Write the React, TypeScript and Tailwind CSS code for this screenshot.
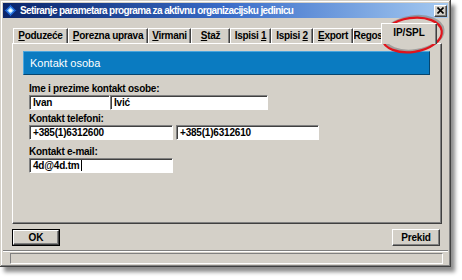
const tabs = [
  { label: "Poduzeće", pre: "", key: "P", rest: "oduzeće", w: "w-[55px]" },
  { label: "Porezna uprava", pre: "", key: "P", rest: "orezna uprava", w: "w-[80px]" },
  { label: "Virmani", pre: "", key: "V", rest: "irmani", w: "w-[43px]" },
  { label: "Staž", pre: "", key: "S", rest: "taž", w: "w-[39px]" },
  { label: "Ispisi 1", pre: "Ispisi\u00a0", key: "1", rest: "", w: "w-[41px]" },
  { label: "Ispisi 2", pre: "Ispisi\u00a0", key: "2", rest: "", w: "w-[42px]" },
  { label: "Export", pre: "", key: "E", rest: "xport", w: "w-[40px]" },
  { label: "Regos", pre: "", key: "", rest: "Regos", w: "w-[30px]" },
];

function Tab({ t }: { t: (typeof tabs)[number] }) {
  return (
    <div
      className={`${t.w} h-[15px] shrink-0 overflow-hidden flex items-center justify-center border-t border-l border-white shadow-[inset_-1px_0_0_#808080] border-r border-r-[#404040] text-[10px] font-bold tracking-[-0.3px] leading-none text-black whitespace-nowrap`}
    >
      <span>
        {t.pre}
        {t.key ? <span className="underline underline-offset-1">{t.key}</span> : null}
        {t.rest}
      </span>
    </div>
  );
}

function Field({ value, w, caret }: { value: string; w: string; caret?: boolean }) {
  return (
    <div
      className={`${w} h-[15px] bg-white border-t border-l border-[#808080] border-b border-r border-b-white border-r-white shadow-[inset_1px_1px_0_#404040] flex items-center pl-[3px] text-[10px] font-bold tracking-[-0.2px] leading-none text-black`}
    >
      {value}
      {caret ? <span className="ml-[1px] w-[1px] h-[11px] bg-black" /> : null}
    </div>
  );
}

export default function App() {
  return (
    <div className="w-[462px] h-[280px] bg-white font-['Liberation_Sans',Arial,sans-serif] overflow-hidden">
      <div className="relative w-[451px] h-[267px] bg-[#d4d0c8] p-[3px] flex flex-col shadow-[inset_-1px_-1px_0_#404040,inset_1px_1px_0_#d4d0c8,inset_-2px_-2px_0_#808080,inset_2px_2px_0_#ffffff,4px_5px_4px_rgba(0,0,0,0.45)]">
        {/* title bar */}
        <div className="h-[15px] flex items-center bg-gradient-to-r from-[#0a246a] via-[#3a6cc8] to-[#a6caf0]">
          <svg width="13" height="13" viewBox="0 0 13 13" className="ml-[1px] shrink-0">
            <path d="M6.5 0.5 L12.5 6.5 L6.5 12.5 L0.5 6.5 Z" fill="#1c5fd0" stroke="#0b2f7a" strokeWidth="1" />
            <path d="M6.5 3 L10 6.5 L6.5 10 L3 6.5 Z" fill="#8fd0ff" />
            <circle cx="6.5" cy="6.5" r="1.6" fill="#ffffff" />
          </svg>
          <span className="ml-[3px] text-[10px] font-bold text-white tracking-[-0.6px] leading-none whitespace-nowrap">
            Setiranje parametara programa za aktivnu organizacijsku jedinicu
          </span>
          <div className="ml-auto mr-[1px] w-[13px] h-[12px] bg-[#d4d0c8] border-t border-l border-white border-b border-r border-b-[#404040] border-r-[#404040] shadow-[inset_-1px_-1px_0_#808080] flex items-center justify-center">
            <svg width="7" height="7" viewBox="0 0 7 7">
              <path d="M0.5 0.5 L6.5 6.5 M6.5 0.5 L0.5 6.5" stroke="#000" strokeWidth="1.6" />
            </svg>
          </div>
        </div>

        {/* tabs */}
        <div className="mt-[4px] h-[21px] flex items-end pl-[10px] relative z-10">
          {tabs.map((t) => (
            <Tab key={t.label} t={t} />
          ))}
          <div className="-ml-[2px] w-[56px] h-[21px] mb-[-1px] bg-[#d4d0c8] flex items-center justify-center border-t border-l border-white border-r border-r-[#404040] shadow-[inset_-1px_0_0_#808080] text-[10px] font-bold leading-none text-black pb-[2px]">
            IP/SPL
          </div>
        </div>

        {/* tab page */}
        <div className="ml-[9px] w-[430px] h-[181px] border-t border-l border-white border-r border-b border-r-[#404040] border-b-[#404040] shadow-[inset_-1px_-1px_0_#808080] flex flex-col pl-[10px] pt-[7px]">
          <div className="w-[407px] h-[24px] bg-[#0a7bc1] border-t border-l border-[#4aa6de] border-r border-b border-r-[#06456e] border-b-[#06456e] flex items-center pl-[6px] text-[11px] text-white leading-none">
            Kontakt osoba
          </div>

          <div className="pl-[6px] flex flex-col">
            <div className="mt-[8px] h-[12px] flex items-center text-[10px] font-bold tracking-[-0.25px] leading-none text-black">
              Ime i prezime kontakt osobe:
            </div>
            <div className="flex">
              <Field value="Ivan" w="w-[81px]" />
              <Field value="Ivić" w="w-[158px]" />
            </div>

            <div className="mt-[2px] h-[13px] flex items-center text-[10px] font-bold tracking-[-0.25px] leading-none text-black">
              Kontakt telefoni:
            </div>
            <div className="flex gap-[3px]">
              <Field value="+385(1)6312600" w="w-[144px]" />
              <Field value="+385(1)6312610" w="w-[143px]" />
            </div>

            <div className="mt-[6px] h-[12px] flex items-center text-[10px] font-bold tracking-[-0.25px] leading-none text-black">
              Kontakt e-mail:
            </div>
            <Field value="4d@4d.tm" w="w-[144px]" caret />
          </div>
        </div>

        {/* buttons */}
        <div className="mt-[5px] flex justify-between pl-[9px] pr-[8px]">
          <div className="w-[48px] h-[17px] border border-black flex">
            <div className="flex-1 border-t border-l border-white border-r border-b border-r-[#404040] border-b-[#404040] shadow-[inset_-1px_-1px_0_#808080] flex items-center justify-center text-[10px] font-bold leading-none text-black">
              OK
            </div>
          </div>
          <div className="w-[48px] h-[17px] border-t border-l border-white border-r border-b border-r-[#404040] border-b-[#404040] shadow-[inset_-1px_-1px_0_#808080] flex items-center justify-center text-[10px] font-bold tracking-[-0.2px] leading-none text-black">
            Prekid
          </div>
        </div>

        {/* status bar */}
        <div className="mt-[4px] h-[2px] border-t border-[#808080] border-b border-b-white" />
        <div className="mt-[1px] ml-[7px] w-[433px] h-[11px] border-t border-l border-[#808080] border-b border-r border-b-white border-r-white" />

        {/* red highlight around IP/SPL */}
        <svg
          className="absolute left-[372px] top-[8px] pointer-events-none"
          width="80"
          height="54"
          viewBox="0 0 80 54"
        >
          <ellipse cx="41.5" cy="25.5" rx="30" ry="17" transform="rotate(-8 41.5 25.5)" fill="none" stroke="#8a8a8a" strokeOpacity="0.7" strokeWidth="2.5" />
          <ellipse cx="40" cy="27" rx="30" ry="17" transform="rotate(-8 40 27)" fill="none" stroke="#e0141c" strokeWidth="2.2" />
        </svg>
      </div>
    </div>
  );
}
